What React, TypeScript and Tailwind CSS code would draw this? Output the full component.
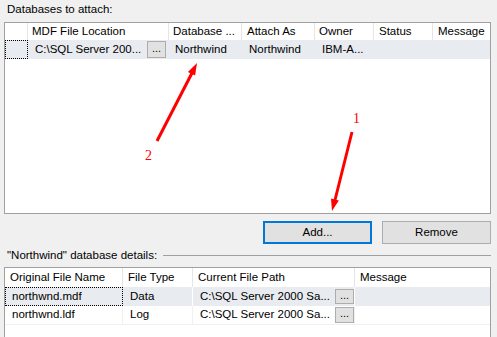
import React from "react";

const font = { fontFamily: '"Liberation Sans", Arial, sans-serif' };

function Dots({ className = "" }: { className?: string }) {
  return (
    <div
      className={`flex items-center justify-center bg-[#e1e1e1] border border-[#adadad] text-[11px] leading-none pb-[3px] ${className}`}
    >
      ...
    </div>
  );
}

export default function App() {
  return (
    <div
      className="relative w-[497px] h-[337px] overflow-hidden bg-[#f0f0f0] text-[11.5px] text-black"
      style={font}
    >
      {/* Top label */}
      <div className="h-[22px] pl-[7px] pt-[2px] leading-[15px]">Databases to attach:</div>

      {/* Top grid */}
      <div className="ml-[4px] w-[487px] h-[192px] border border-[#a0a0a0] bg-white">
        <div className="flex h-[17px] leading-[17px]">
          <div className="w-[23px] border-r border-[#e5e5e5]" />
          <div className="w-[141px] border-r border-[#e5e5e5] pl-[4px] truncate">MDF File Location</div>
          <div className="w-[73px] border-r border-[#e5e5e5] pl-[4px] whitespace-nowrap overflow-hidden">Database ...</div>
          <div className="w-[73px] border-r border-[#e5e5e5] pl-[5px] whitespace-nowrap">Attach As</div>
          <div className="w-[59px] border-r border-[#e5e5e5] pl-[4px] whitespace-nowrap">Owner</div>
          <div className="w-[59px] border-r border-[#e5e5e5] pl-[5px] whitespace-nowrap">Status</div>
          <div className="flex-1 pl-[5px] whitespace-nowrap">Message</div>
        </div>
        <div className="flex h-[19px] leading-[17px] bg-[#e8ebef]">
          <div className="w-[23px] border border-dotted border-black" />
          <div className="w-[141px] flex items-center justify-between pl-[7px] pr-[3px]">
            <span className="whitespace-nowrap">C:\SQL Server 200...</span>
            <Dots className="w-[19px] h-[17px]" />
          </div>
          <div className="w-[73px] pl-[6px] flex items-center whitespace-nowrap">Northwind</div>
          <div className="w-[73px] pl-[7px] flex items-center whitespace-nowrap">Northwind</div>
          <div className="w-[59px] pl-[7px] flex items-center whitespace-nowrap">IBM-A...</div>
          <div className="w-[59px]" />
          <div className="flex-1" />
        </div>
      </div>

      {/* Buttons */}
      <div className="mt-[7px] flex justify-end gap-[10px] pr-[6px]">
        <button className="w-[109px] h-[23px] bg-[#e1e1e1] border-2 border-[#0078d7] leading-none">
          Add...
        </button>
        <button className="w-[109px] h-[23px] bg-[#e1e1e1] border border-[#adadad] leading-none">
          Remove
        </button>
      </div>

      {/* Details label */}
      <div className="h-[23px] flex items-center pl-[7px] pr-[6px]">
        <span className="whitespace-nowrap leading-[15px]">"Northwind" database details:</span>
        <div className="flex-1 ml-[6px] h-px bg-[#a0a0a0]" />
      </div>

      {/* Bottom grid */}
      <div className="ml-[4px] w-[487px] h-[80px] border border-[#a0a0a0] bg-white">
        <div className="flex h-[19px] leading-[19px]">
          <div className="w-[118px] border-r border-[#e5e5e5] pl-[5px] whitespace-nowrap">Original File Name</div>
          <div className="w-[70px] border-r border-[#e5e5e5] pl-[5px] whitespace-nowrap">File Type</div>
          <div className="w-[162px] border-r border-[#e5e5e5] pl-[5px] whitespace-nowrap">Current File Path</div>
          <div className="flex-1 pl-[5px] whitespace-nowrap">Message</div>
        </div>
        <div className="flex h-[19px] bg-[#e8ebef]">
          <div className="w-[118px] border border-dotted border-black pl-[6px] flex items-center whitespace-nowrap">
            northwnd.mdf
          </div>
          <div className="w-[70px] border-r border-white pl-[7px] flex items-center">Data</div>
          <div className="w-[162px] border-r border-white pl-[7px] flex items-center justify-between">
            <span className="whitespace-nowrap">C:\SQL Server 2000 Sa...</span>
            <Dots className="w-[19px] h-[15px]" />
          </div>
          <div className="flex-1" />
        </div>
        <div className="flex h-[19px] border-b border-[#f0f0f0]">
          <div className="w-[118px] border-r border-[#f0f0f0] pl-[7px] flex items-center whitespace-nowrap">
            northwnd.ldf
          </div>
          <div className="w-[70px] border-r border-[#f0f0f0] pl-[7px] flex items-center">Log</div>
          <div className="w-[162px] border-r border-[#f0f0f0] pl-[7px] flex items-center justify-between">
            <span className="whitespace-nowrap">C:\SQL Server 2000 Sa...</span>
            <Dots className="w-[19px] h-[16px]" />
          </div>
          <div className="flex-1" />
        </div>
      </div>

      {/* Annotation arrows */}
      <svg
        className="absolute left-0 top-0 pointer-events-none"
        width={497}
        height={337}
        viewBox="0 0 497 337"
      >
        <line x1={157} y1={141} x2={192} y2={73} stroke="#ff0000" strokeWidth={3} />
        <polygon points="197,63 195.1,75.5 187.9,71.9" fill="#ff0000" />
        <text x={145} y={160} fill="#ff0000" fontSize={14} fontFamily='"Liberation Serif", serif'>
          2
        </text>

        <line x1={352} y1={132} x2={335} y2={200} stroke="#ff0000" strokeWidth={3} />
        <polygon points="332,211 338.8,200.4 331,198.4" fill="#ff0000" />
        <text x={353} y={123} fill="#ff0000" fontSize={14} fontFamily='"Liberation Serif", serif'>
          1
        </text>
      </svg>
    </div>
  );
}
